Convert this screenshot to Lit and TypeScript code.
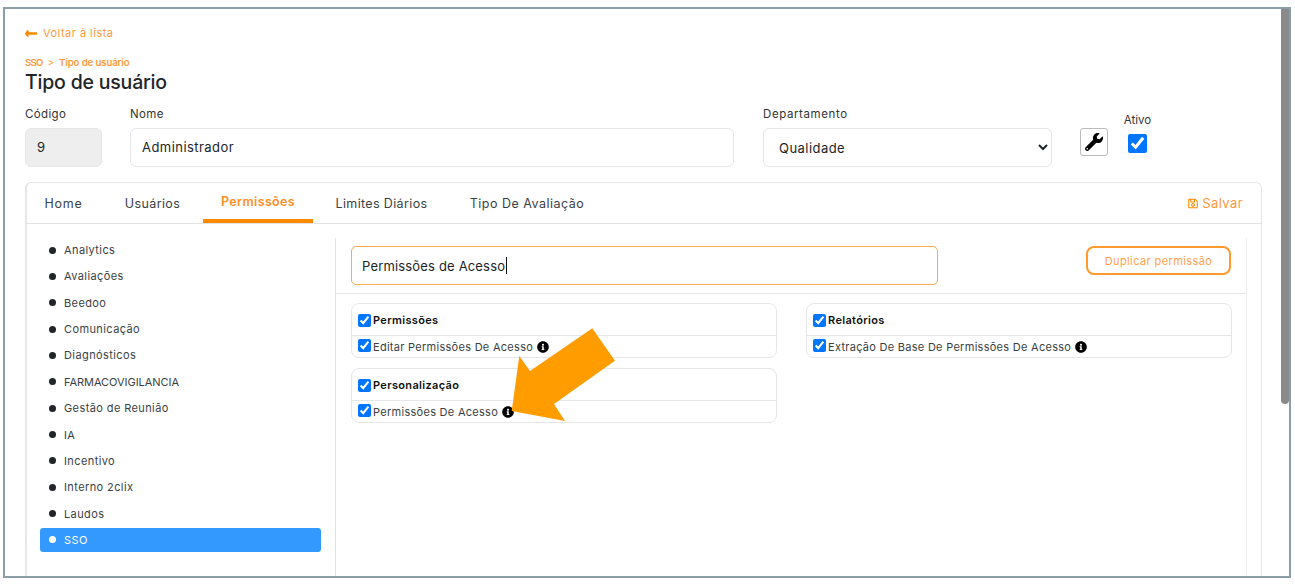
import { LitElement, html, css, svg } from "lit";
import { customElement } from "lit/decorators.js";

const WRENCH = svg`<path d="M507.73 109.1c-2.24-9.03-13.54-12.09-20.12-5.51l-74.36 74.36-67.88-11.31-11.31-67.88 74.36-74.36c6.62-6.62 3.43-17.9-5.66-20.16-47.38-11.74-99.55.91-136.58 37.93-39.64 39.64-50.55 97.1-34.05 147.2L18.74 402.76c-24.99 24.99-24.99 65.51 0 90.5 24.99 24.99 65.51 24.99 90.5 0l213.21-213.21c50.12 16.71 107.47 5.68 147.37-34.22 37.07-37.07 49.7-89.32 37.91-136.73zM64 472c-13.25 0-24-10.75-24-24 0-13.26 10.75-24 24-24s24 10.74 24 24c0 13.25-10.75 24-24 24z"/>`;
const INFO = svg`<path d="M256 8C119.043 8 8 119.083 8 256c0 136.997 111.043 248 248 248s248-111.003 248-248C504 119.083 392.957 8 256 8zm0 110c23.196 0 42 18.804 42 42s-18.804 42-42 42-42-18.804-42-42 18.804-42 42-42zm56 254c0 6.627-5.373 12-12 12h-88c-6.627 0-12-5.373-12-12v-24c0-6.627 5.373-12 12-12h12v-64h-12c-6.627 0-12-5.373-12-12v-24c0-6.627 5.373-12 12-12h64c6.627 0 12 5.373 12 12v100h12c6.627 0 12 5.373 12 12v24z"/>`;
const SAVE = svg`<path d="M433.941 129.941l-83.882-83.882A48 48 0 0 0 316.118 32H48C21.49 32 0 53.49 0 80v352c0 26.51 21.49 48 48 48h352c26.51 0 48-21.49 48-48V163.882a48 48 0 0 0-14.059-33.941zM272 80v80H144V80h128zm122 352H54a6 6 0 0 1-6-6V86a6 6 0 0 1 6-6h42v104c0 13.255 10.745 24 24 24h176c13.255 0 24-10.745 24-24V83.882l78.243 78.243a6 6 0 0 1 1.757 4.243V426a6 6 0 0 1-6 6zM224 232c-48.523 0-88 39.477-88 88s39.477 88 88 88 88-39.477 88-88-39.477-88-88-88zm0 128c-22.056 0-40-17.944-40-40s17.944-40 40-40 40 17.944 40 40-17.944 40-40 40z"/>`;
const BACK = svg`<path d="M134.059 296H436c6.627 0 12-5.373 12-12v-56c0-6.627-5.373-12-12-12H134.059v-46.059c0-21.382-25.851-32.09-40.971-16.971L7.029 239.029c-9.373 9.373-9.373 24.569 0 33.941l86.059 86.059c15.119 15.119 40.971 4.411 40.971-16.971V296z"/>`;

const MODULES = ["Analytics", "Avaliações", "Beedoo", "Comunicação", "Diagnósticos", "FARMACOVIGILANCIA", "Gestão de Reunião", "IA", "Incentivo", "Interno 2clix", "Laudos", "SSO"];
const TABS = [
  { label: "Home", cls: "t-home" },
  { label: "Usuários", cls: "t-users" },
  { label: "Permissões", cls: "t-perm active" },
  { label: "Limites Diários", cls: "t-lim" },
  { label: "Tipo De Avaliação", cls: "t-aval" },
];

@customElement("app-root")
export class AppRoot extends LitElement {
  static styles = css`
    :host { display: block; padding: 7px 0 0 3px; font-family: Inter, "Noto Sans", sans-serif; color: #212529; background: #fff; }
    * { box-sizing: border-box; }
    input[type="checkbox"] { margin: 0; flex: none; }
    .frame { position: relative; width: 1288px; height: 571px; border: 2px solid #8c9ea8; overflow: hidden; padding: 0 0 0 20px; background: #fff; }
    .scroll { position: absolute; top: 0; right: 0; width: 8px; height: 395px; background: #8a8a8a; border-radius: 0 0 4px 4px; }
    .arrow { position: absolute; left: -5px; top: -9px; width: 1295px; height: 588px; pointer-events: none; }

    .back { display: flex; align-items: center; gap: 6px; height: 16px; margin-top: 16px; color: #ff9a3c; font-size: 11px; letter-spacing: 0.48px; }
    .back svg { width: 12px; height: 7px; fill: #ff8a00; }
    .crumb { display: flex; align-items: center; height: 12px; margin-top: 15px; color: #ff9a3c; font-size: 9.6px; font-weight: 600; letter-spacing: -0.1px; }
    .crumb .sso { letter-spacing: -0.7px; }
    .crumb .sep { margin: 0 5px 0 5px; font-weight: 500; }
    h1 { margin: 1px 0 0; height: 27px; line-height: 27px; font-size: 19.5px; font-weight: 500; color: #212529; letter-spacing: -0.2px; }

    .fields { display: flex; align-items: flex-start; margin-top: 11px; }
    .field { display: flex; flex-direction: column; gap: 7px; }
    .field label { height: 14px; line-height: 14px; font-size: 11.5px; letter-spacing: 0.35px; color: #333; }
    .f-dep label { letter-spacing: 0.6px; }
    .control { height: 39px; border: 1px solid #e4e6ea; border-radius: 6px; padding: 0 11px; font: 13px Inter, sans-serif; letter-spacing: 0.45px; color: #212529; background: #fff; outline: none; width: 100%; }
    input.control { padding-bottom: 2px; }
    .f-code { width: 77px; margin-right: 28px; }
    .f-code .control { background: #eee; }
    .f-name { width: 604px; margin-right: 29px; }
    .f-dep { width: 289px; margin-right: 28px; }
    .wrench { flex: none; width: 28px; height: 28px; margin: 21px 15px 0 0; border: 1px solid #bbb; border-radius: 3px; background: #fff; padding: 0; display: flex; align-items: center; justify-content: center; }
    .wrench svg { width: 18px; height: 18px; fill: #000; }
    .f-active { width: 29px; display: flex; flex-direction: column; align-items: center; margin-top: 6px; }
    .f-active label { height: 14px; line-height: 14px; font-size: 11.5px; color: #333; white-space: nowrap; }
    .f-active input { width: 19px; height: 19px; margin-top: 7px; }

    .card { width: 1237px; height: 420px; margin-top: 15px; border: 1px solid #e4e6ea; border-left-width: 2px; border-radius: 6px 6px 0 0; }
    .tabs { display: flex; height: 41px; border-bottom: 1px solid #e2e2e2; align-items: stretch; padding-right: 18px; }
    .tab { display: flex; align-items: center; justify-content: center; white-space: nowrap; font-size: 12.5px; letter-spacing: 0.5px; color: #3a3f44; border-bottom: 4px solid transparent; padding-top: 4px; }
    .t-home { margin-left: 17px; width: 39px; letter-spacing: 0.8px; }
    .t-users { margin-left: 42px; width: 55px; letter-spacing: 0.4px; }
    .t-perm { margin-left: 23px; width: 110px; }
    .t-lim { margin-left: 23px; width: 91px; letter-spacing: 0.36px; }
    .t-aval { margin-left: 43px; width: 114px; }
    .tab.active { color: #ff8f1f; font-weight: 600; border-bottom-color: #ff8a00; padding-top: 0; letter-spacing: 0.35px; }
    .save { margin-left: auto; display: flex; align-items: center; gap: 4px; color: #ff9a3c; font-size: 13px; letter-spacing: 0.4px; }
    .save svg { width: 10px; height: 11px; fill: #ff8a00; }

    .body { display: flex; align-items: stretch; height: 378px; }
    .side { width: 308px; padding: 14px 14px 0 13px; margin: 0; list-style: none; display: flex; flex-direction: column; gap: 2.36px; }
    .side li { height: 24px; flex: none; display: flex; align-items: center; gap: 8px; padding-left: 9px; border-radius: 3px; font-size: 11px; letter-spacing: 0.4px; color: #3a3f44; }
    .side li::before { content: ""; width: 7px; height: 7px; border-radius: 50%; background: #212529; flex: none; }
    .side li.sel { background: #3399ff; color: #fff; }
    .side li.sel::before { background: #fff; }
    .side li.caps { letter-spacing: -0.05px; }

    .main { width: 912px; margin-top: 14px; border-left: 1px solid #e2e2e2; border-right: 1px solid #ececec; }
    .search-row { display: flex; align-items: flex-start; height: 56px; padding: 8px 15px 0 15px; border-bottom: 1px solid #e6e6e6; }
    .search { width: 587px; height: 39px; border: 1px solid #ffa94d; border-radius: 5px; display: flex; align-items: center; padding-left: 10px; font-size: 13px; letter-spacing: 0.17px; color: #212529; }
    .caret { display: inline-block; width: 1px; height: 17px; background: #111; margin-left: 1px; }
    .dup { margin-left: auto; width: 145px; height: 29px; border: 2px solid #ff9a2e; border-radius: 8px; background: #fff; padding: 0; color: #ff9f4d; font: 400 11px Inter, sans-serif; letter-spacing: 0.4px; }

    .groups { display: grid; grid-template-columns: 426px 426px; column-gap: 29px; row-gap: 10px; padding: 9px 0 0 15px; align-items: start; }
    .group { border: 1px solid #e4e6ea; border-radius: 8px; }
    .g-head { height: 32px; display: flex; align-items: center; gap: 2px; padding: 1px 0 0 6px; border-bottom: 1px solid #e4e6ea; font-size: 11px; font-weight: 600; color: #111; letter-spacing: 0.34px; }
    .g-row { height: 21px; display: flex; align-items: center; gap: 2px; padding-left: 6px; font-size: 11px; letter-spacing: 0.28px; color: #3a3f44; }
    .g-row input { margin-top: -3px; }
    .g-row svg { width: 12px; height: 12px; fill: #000; margin-left: 2px; }
  `;

  private row(label: string) {
    return html`<div class="g-row"><input type="checkbox" checked /><span>${label}</span><svg viewBox="0 0 512 512">${INFO}</svg></div>`;
  }

  private group(title: string, item: string) {
    return html`<div class="group">
      <div class="g-head"><input type="checkbox" checked /><span>${title}</span></div>
      ${this.row(item)}
    </div>`;
  }

  private itemClass(m: string) {
    if (m === "SSO") return "sel";
    return m === m.toUpperCase() && m.length > 2 ? "caps" : "";
  }

  render() {
    return html`<div class="frame">
      <div class="back"><svg viewBox="0 152 448 208" preserveAspectRatio="none">${BACK}</svg>Voltar à lista</div>
      <div class="crumb"><span class="sso">SSO</span><span class="sep">&gt;</span>Tipo de usuário</div>
      <h1>Tipo de usuário</h1>
      <div class="fields">
        <div class="field f-code"><label>Código</label><input class="control" value="9" disabled /></div>
        <div class="field f-name"><label>Nome</label><input class="control" value="Administrador" /></div>
        <div class="field f-dep"><label>Departamento</label>
          <select class="control"><option>Qualidade</option></select>
        </div>
        <button class="wrench" aria-label="Configurar"><svg viewBox="0 0 512 512">${WRENCH}</svg></button>
        <div class="f-active"><label>Ativo</label><input type="checkbox" checked /></div>
      </div>
      <div class="card">
        <div class="tabs">
          ${TABS.map((t) => html`<div class="tab ${t.cls}">${t.label}</div>`)}
          <div class="save"><svg viewBox="0 0 448 512">${SAVE}</svg>Salvar</div>
        </div>
        <div class="body">
          <ul class="side">
            ${MODULES.map((m) => html`<li class=${this.itemClass(m)}>${m}</li>`)}
          </ul>
          <div class="main">
            <div class="search-row">
              <div class="search">Permissões de Acesso<span class="caret"></span></div>
              <button class="dup">Duplicar permissão</button>
            </div>
            <div class="groups">
              ${this.group("Permissões", "Editar Permissões De Acesso")}
              ${this.group("Relatórios", "Extração De Base De Permissões De Acesso")}
              ${this.group("Personalização", "Permissões De Acesso")}
            </div>
          </div>
        </div>
      </div>
      <div class="scroll"></div>
      <svg class="arrow" viewBox="0 0 1295 588"><polygon fill="#ff9d00" points="511.7,411 519.3,356 530,371 592.3,328.3 615,360.7 554,404 565,421"/></svg>
    </div>`;
  }
}
